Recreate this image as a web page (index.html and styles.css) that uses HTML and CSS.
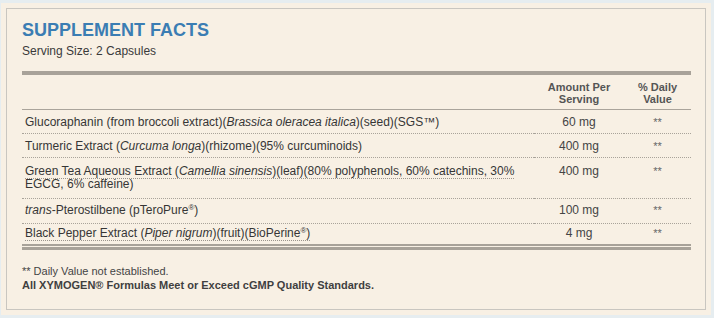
FILE: index.html
```html
<!DOCTYPE html>
<html lang="en">
<head>
<meta charset="utf-8">
<title>Supplement Facts</title>
<link rel="stylesheet" href="styles.css">
</head>
<body>
<div class="page">
  <div class="facts">
    <h2 class="title">SUPPLEMENT FACTS</h2>
    <p class="serving">Serving Size: 2 Capsules</p>
    <div class="rule-thick"></div>
    <table class="facts-table">
      <colgroup>
        <col class="col-name">
        <col class="col-amt">
        <col class="col-dv">
      </colgroup>
      <thead>
        <tr>
          <th class="name"></th>
          <th class="amt">Amount Per<br>Serving</th>
          <th class="dv">% Daily<br>Value</th>
        </tr>
      </thead>
      <tbody>
        <tr>
          <td class="name">Glucoraphanin (from broccoli extract)(<i>Brassica oleracea italica</i>)(seed)(SGS™)</td>
          <td class="amt">60 mg</td>
          <td class="dv">**</td>
        </tr>
        <tr>
          <td class="name">Turmeric Extract (<i>Curcuma longa</i>)(rhizome)(95% curcuminoids)</td>
          <td class="amt">400 mg</td>
          <td class="dv">**</td>
        </tr>
        <tr class="multi">
          <td class="name"><span class="tip">Green Tea Aqueous Extract (<i>Camellia sinensis</i>)(leaf)(80% polyphenols, 60% catechins, 30%</span> EGCG, 6% caffeine)</td>
          <td class="amt">400 mg</td>
          <td class="dv">**</td>
        </tr>
        <tr class="row-sup">
          <td class="name"><i>trans</i>-Pterostilbene (pTeroPure<sup>®</sup>)</td>
          <td class="amt">100 mg</td>
          <td class="dv">**</td>
        </tr>
        <tr class="last">
          <td class="name"><span class="tip">Black Pepper Extract (<i>Piper nigrum</i>)(fruit)(BioPerine<sup>®</sup>)</span></td>
          <td class="amt">4 mg</td>
          <td class="dv">**</td>
        </tr>
      </tbody>
    </table>
    <div class="rule-bottom"></div>
    <p class="note">** Daily Value not established.</p>
    <p class="note note-strong">All XYMOGEN® Formulas Meet or Exceed cGMP Quality Standards.</p>
  </div>
</div>
</body>
</html>
```
FILE: styles.css
```css
html, body {
  margin: 0;
  padding: 0;
}

body {
  background: #e6edf0;
  font-family: "Liberation Sans", Arial, Helvetica, sans-serif;
  color: #363636;
}

.page {
  margin: 3px 3px 4px 1px;
  padding: 5px;
  background: #f8f0e4;
}

.facts {
  border: 1px solid #c9c6c0;
  padding: 11px 14px 17px 15px;
}

.title {
  margin: 0;
  font-size: 18px;
  line-height: 20px;
  font-weight: bold;
  color: #3b7db3;
}

.serving {
  margin: 4px 0 0;
  font-size: 12px;
  line-height: 15px;
  color: #3a3a3a;
}

.rule-thick {
  margin-top: 12px;
  height: 4px;
  background: #a8a299;
}

.facts-table {
  width: 100%;
  table-layout: fixed;
  border-collapse: separate;
  border-spacing: 0;
  font-size: 12px;
  line-height: 15px;
}

.col-name { width: 512px; }
.col-amt { width: 90px; }
.col-dv { width: 67px; }

.facts-table th {
  padding: 6px 3px 4px;
  font-size: 11px;
  line-height: 12px;
  font-weight: bold;
  color: #555;
  text-align: center;
  vertical-align: bottom;
  border-bottom: 1px solid #aaa49b;
}

.facts-table td {
  padding: 5px 3px 3px;
  vertical-align: top;
  border-bottom: 1px dotted #a9a39a;
  color: #363636;
}

.facts-table td.name {
  text-align: left;
}

.facts-table td.amt,
.facts-table td.dv {
  text-align: center;
  color: #444;
}

.facts-table td.dv {
  color: #666;
  font-size: 11px;
}

.facts-table tr.multi td {
  padding: 7px 3px 7px;
  line-height: 13px;
}

.facts-table tr.row-sup td {
  padding: 4px 3px 5px;
}

.facts-table tr.last td {
  padding: 2px 3px 3px;
  border-bottom: 2px solid #a8a299;
}

.tip {
  border-bottom: 1px dotted #9a948c;
  white-space: nowrap;
}

sup {
  font-size: 8px;
  line-height: 0;
  vertical-align: 4px;
}

.rule-bottom {
  margin-top: 1px;
  height: 3px;
  background: #a8a299;
}

.note {
  margin: 0;
  font-size: 11px;
  line-height: 14px;
  color: #444;
}

.rule-bottom + .note {
  margin-top: 14px;
}

.note-strong {
  font-weight: bold;
  color: #3f3f3f;
}
```
